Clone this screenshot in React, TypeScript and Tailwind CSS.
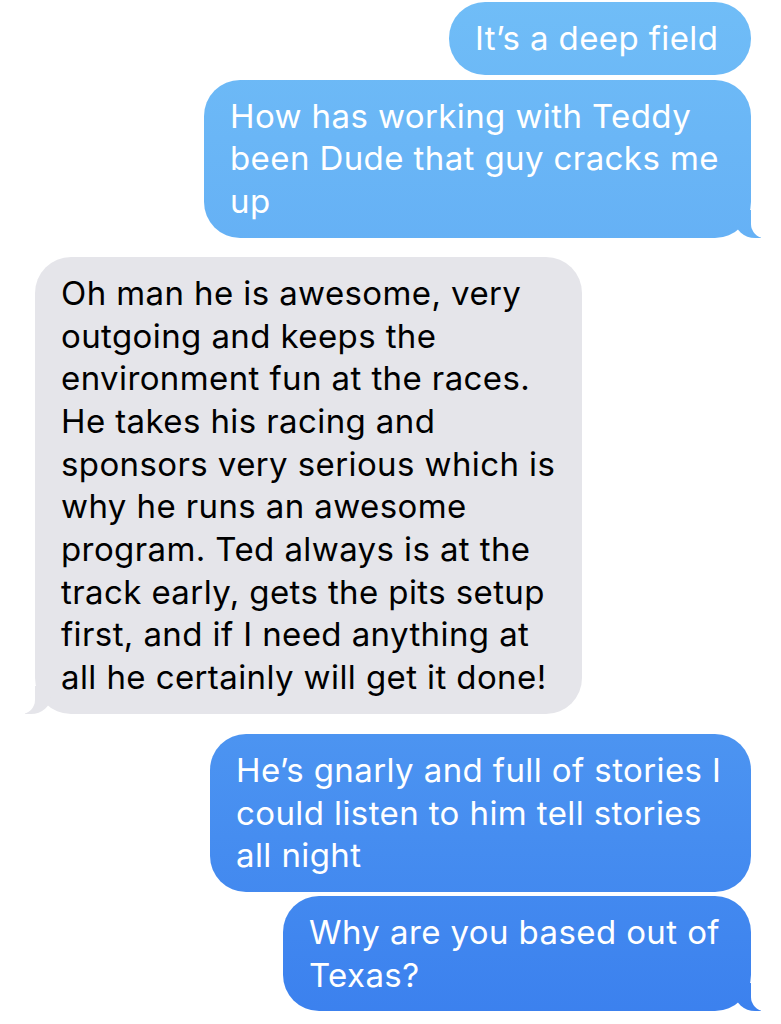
import React from "react";

type Msg = { from: "me" | "them"; lines: string[]; width: number; tail?: boolean; gap: string };

const messages: Msg[] = [
  { from: "me", lines: ["It’s a deep field"], width: 302, gap: "mt-[2px]" },
  {
    from: "me",
    lines: ["How has working with Teddy", "been Dude that guy cracks me", "up"],
    width: 547,
    tail: true,
    gap: "mt-[5px]",
  },
  {
    from: "them",
    lines: [
      "Oh man he is awesome, very",
      "outgoing and keeps the",
      "environment fun at the races.",
      "He takes his racing and",
      "sponsors very serious which is",
      "why he runs an awesome",
      "program. Ted always is at the",
      "track early, gets the pits setup",
      "first, and if I need anything at",
      "all he certainly will get it done!",
    ],
    width: 547,
    tail: true,
    gap: "mt-[19px]",
  },
  {
    from: "me",
    lines: ["He’s gnarly and full of stories I", "could listen to him tell stories", "all night"],
    width: 541,
    gap: "mt-[20px]",
  },
  { from: "me", lines: ["Why are you based out of", "Texas?"], width: 468, tail: true, gap: "mt-[4px]" },
];

const blue = "bg-fixed bg-linear-to-b from-[#70bdf7] via-[#5aa3f3] to-[#3b80ee]";

function Bubble({ m }: { m: Msg }) {
  const mine = m.from === "me";
  return (
    <div className={`flex ${mine ? "justify-end pr-[30px]" : "justify-start pl-[35px]"} ${m.gap}`}>
      <div
        style={{ width: m.width }}
        className={`relative rounded-[36px] px-[26px] pt-[15px] pb-[15px] text-[33px] leading-[42.7px] tracking-[0.4px] ${
          mine ? `${blue} text-white` : "bg-[#e5e5ea] text-black"
        }`}
      >
        {m.tail && mine && (
          <>
            <span className={`absolute bottom-0 right-[-10px] h-[28px] w-[26px] rounded-bl-[20px_18px] ${blue}`} />
            <span className="absolute bottom-0 right-[-32px] h-[28px] w-[32px] rounded-bl-[14px] bg-white" />
          </>
        )}
        {m.tail && !mine && (
          <>
            <span className="absolute bottom-0 left-[-10px] h-[28px] w-[26px] rounded-br-[20px_18px] bg-[#e5e5ea]" />
            <span className="absolute bottom-0 left-[-32px] h-[28px] w-[32px] rounded-br-[14px] bg-white" />
          </>
        )}
        <div className="relative whitespace-nowrap">
          {m.lines.map((l, i) => (
            <div key={i}>{l}</div>
          ))}
        </div>
      </div>
    </div>
  );
}

export default function App() {
  return (
    <div className="h-[1024px] w-[781px] overflow-hidden bg-white font-['Inter','Noto_Sans',sans-serif]">
      {messages.map((m, i) => (
        <Bubble key={i} m={m} />
      ))}
    </div>
  );
}
